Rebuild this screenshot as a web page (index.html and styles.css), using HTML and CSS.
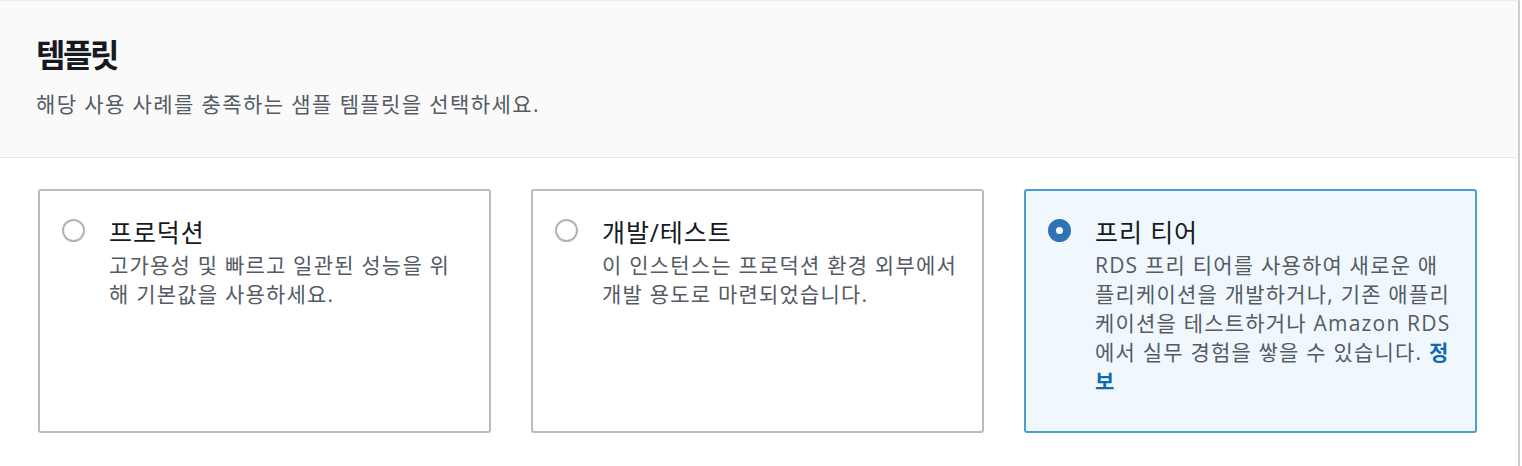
FILE: index.html
```html
<!DOCTYPE html>
<html lang="ko">
<head>
<meta charset="utf-8">
<title>템플릿</title>
<link rel="stylesheet" href="styles.css">
</head>
<body>
<div class="panel">
  <header class="panel-header">
    <h2 class="panel-title">템플릿</h2>
    <p class="panel-desc">해당 사용 사례를 충족하는 샘플 템플릿을 선택하세요.</p>
  </header>
  <div class="tiles">
    <label class="tile">
      <span class="radio"></span>
      <span class="tile-body">
        <span class="tile-title">프로덕션</span>
        <span class="tile-desc">고가용성 및 빠르고 일관된 성능을 위<br>해 기본값을 사용하세요.</span>
      </span>
    </label>
    <label class="tile">
      <span class="radio"></span>
      <span class="tile-body">
        <span class="tile-title">개발/테스트</span>
        <span class="tile-desc">이 인스턴스는 프로덕션 환경 외부에서<br>개발 용도로 마련되었습니다.</span>
      </span>
    </label>
    <label class="tile tile-selected">
      <span class="radio radio-checked"></span>
      <span class="tile-body">
        <span class="tile-title">프리 티어</span>
        <span class="tile-desc">RDS 프리 티어를 사용하여 새로운 애<br>플리케이션을 개발하거나, 기존 애플리<br>케이션을 테스트하거나 Amazon RDS<br>에서 실무 경험을 쌓을 수 있습니다. <a class="info-link" href="#">정<br>보</a></span>
      </span>
    </label>
  </div>
</div>
</body>
</html>
```

FILE: styles.css
```css
html, body {
  margin: 0;
  padding: 0;
  background: #ffffff;
}

body {
  font-family: "Open Sans", "Noto Sans CJK KR", sans-serif;
  color: #16191f;
  width: 1522px;
  height: 466px;
  overflow: hidden;
}

.panel {
  width: 1520px;
  height: 466px;
  box-sizing: border-box;
  border-top: 1px solid #eaeded;
  border-right: 2px solid #c9cfcf;
  background: #ffffff;
}

.panel-header {
  background: #fafafa;
  border-bottom: 1px solid #e6eaea;
  padding: 34px 36px 0;
  height: 157px;
  box-sizing: border-box;
}

.panel-title {
  margin: 0;
  font-size: 32px;
  line-height: 40px;
  font-weight: 700;
  color: #16191f;
  letter-spacing: -2.5px;
}

.panel-desc {
  margin: 15px 0 0;
  font-size: 21px;
  line-height: 28px;
  color: #545b64;
  letter-spacing: 1.4px;
}

.tiles {
  display: grid;
  grid-template-columns: repeat(3, 1fr);
  column-gap: 40px;
  padding: 31px 41px 0 38px;
}

.tile {
  display: flex;
  align-items: flex-start;
  gap: 24px;
  height: 244px;
  box-sizing: border-box;
  border: 2px solid #b3bebf;
  border-radius: 3px;
  padding: 27px 18px 0 22px;
  background: #ffffff;
}

.tile-selected {
  border-color: #4a9fcf;
  background: #f1f8fd;
}

.radio {
  flex: none;
  width: 23px;
  height: 23px;
  box-sizing: border-box;
  border: 2px solid #aab7b8;
  border-radius: 50%;
  margin-top: 1px;
  background: #ffffff;
}

.radio-checked {
  border: 8px solid #2f72b6;
  background: #ffffff;
}

.tile-body {
  display: flex;
  flex-direction: column;
  gap: 5px;
}

.tile-title {
  font-size: 25px;
  line-height: 28px;
  color: #16191f;
  letter-spacing: 0.9px;
}

.tile-desc {
  font-size: 21px;
  line-height: 29px;
  color: #545b64;
  letter-spacing: 1.2px;
  white-space: nowrap;
}

.info-link {
  color: #0f6bb3;
  font-weight: 700;
  text-decoration: none;
}
```
